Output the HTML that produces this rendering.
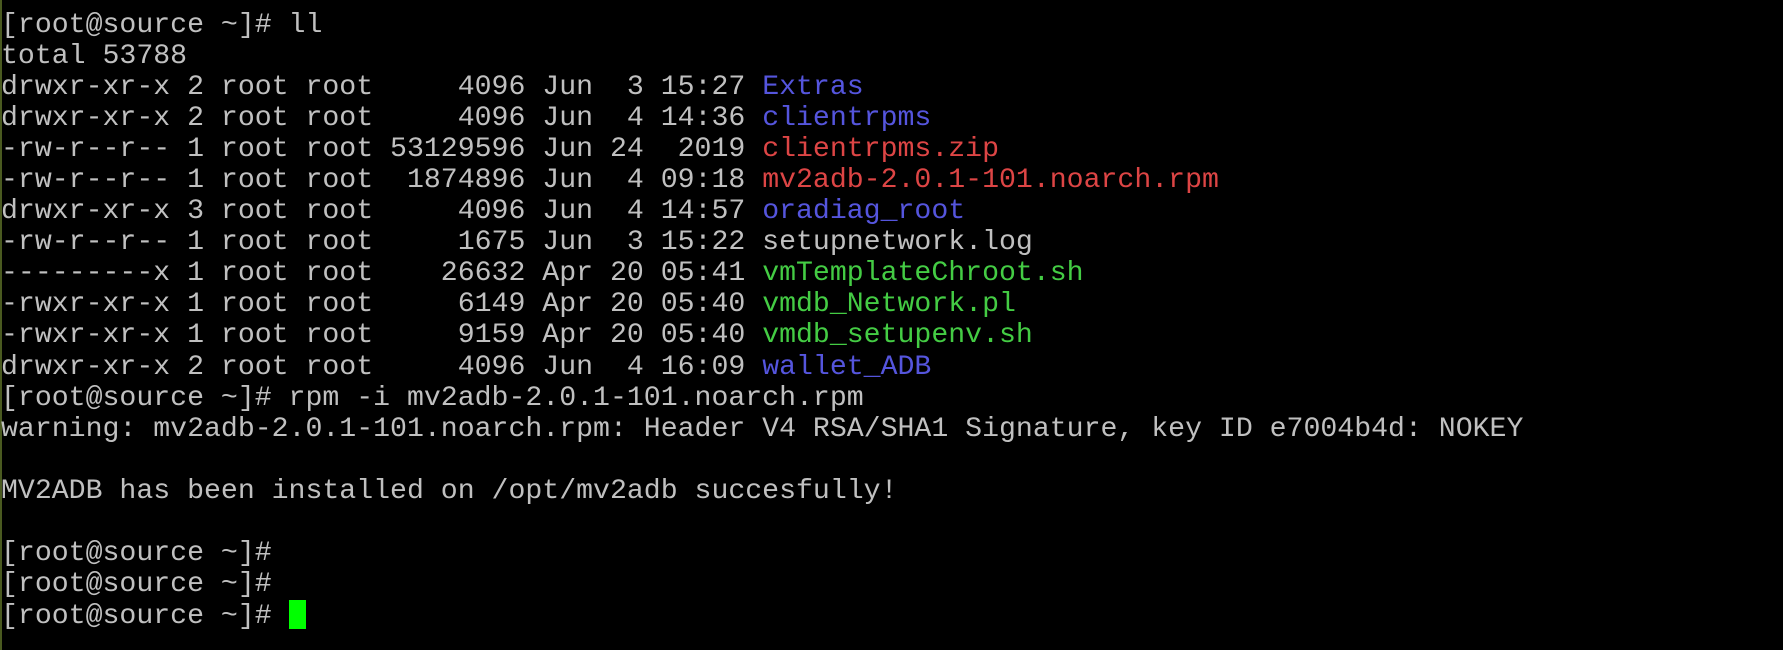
<!DOCTYPE html>
<html><head><style>
html,body{margin:0;padding:0;background:#000;width:1783px;height:650px;overflow:hidden}
.bar{position:absolute;left:0;top:0;width:2px;height:650px;background:#4a5a20}
pre{position:absolute;left:1px;top:10px;margin:0;font-family:"Liberation Mono",monospace;font-size:28.2px;line-height:31.05px;color:#c0c0c0;letter-spacing:0}
.b{color:#5555dd}.r{color:#dd4545}.g{color:#44cc44}
.cur{display:inline-block;width:17px;height:29px;background:#00ff00;vertical-align:-6px}
</style></head><body><div class="bar"></div><pre>[root@source ~]# ll
total 53788
drwxr-xr-x 2 root root     4096 Jun  3 15:27 <span class="b">Extras</span>
drwxr-xr-x 2 root root     4096 Jun  4 14:36 <span class="b">clientrpms</span>
-rw-r--r-- 1 root root 53129596 Jun 24  2019 <span class="r">clientrpms.zip</span>
-rw-r--r-- 1 root root  1874896 Jun  4 09:18 <span class="r">mv2adb-2.0.1-101.noarch.rpm</span>
drwxr-xr-x 3 root root     4096 Jun  4 14:57 <span class="b">oradiag_root</span>
-rw-r--r-- 1 root root     1675 Jun  3 15:22 setupnetwork.log
---------x 1 root root    26632 Apr 20 05:41 <span class="g">vmTemplateChroot.sh</span>
-rwxr-xr-x 1 root root     6149 Apr 20 05:40 <span class="g">vmdb_Network.pl</span>
-rwxr-xr-x 1 root root     9159 Apr 20 05:40 <span class="g">vmdb_setupenv.sh</span>
drwxr-xr-x 2 root root     4096 Jun  4 16:09 <span class="b">wallet_ADB</span>
[root@source ~]# rpm -i mv2adb-2.0.1-101.noarch.rpm
warning: mv2adb-2.0.1-101.noarch.rpm: Header V4 RSA/SHA1 Signature, key ID e7004b4d: NOKEY

MV2ADB has been installed on /opt/mv2adb succesfully!

[root@source ~]#
[root@source ~]#
[root@source ~]# <span class="cur"></span></pre></body></html>
